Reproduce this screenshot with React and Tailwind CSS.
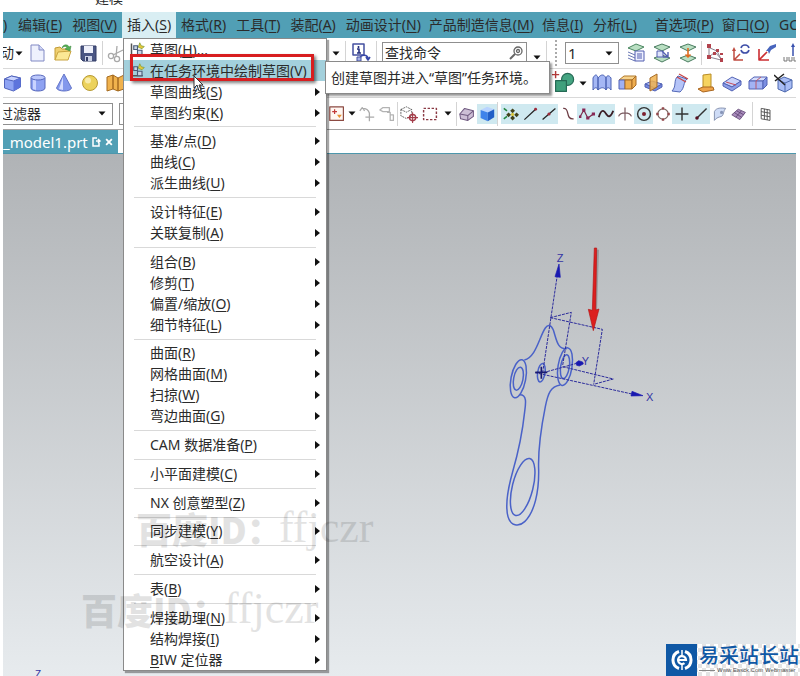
import React from "react";

const MENUS = [
  ["编辑", "E"],
  ["视图", "V"],
  ["插入", "S"],
  ["格式", "R"],
  ["工具", "T"],
  ["装配", "A"],
  ["动画设计", "N"],
  ["产品制造信息", "M"],
  ["信息", "I"],
  ["分析", "L"],
  ["首选项", "P"],
  ["窗口", "O"],
];

const INSERT_GROUPS = [
  [["草图", "H", "..."], ["在任务环境中绘制草图", "V"], ["草图曲线", "S"], ["草图约束", "K"]],
  [["基准/点", "D"], ["曲线", "C"], ["派生曲线", "U"]],
  [["设计特征", "E"], ["关联复制", "A"]],
  [["组合", "B"], ["修剪", "T"], ["偏置/缩放", "O"], ["细节特征", "L"]],
  [["曲面", "R"], ["网格曲面", "M"], ["扫掠", "W"], ["弯边曲面", "G"]],
  [["CAM 数据准备", "P"]],
  [["小平面建模", "C"]],
  [["NX 创意塑型", "Z"]],
  [["同步建模", "Y"]],
  [["航空设计", "A"]],
  [["表", "B"]],
  [["焊接助理", "N"], ["结构焊接", "I"], ["BIW 定位器", ""]],
];

function Label({ text, letter, tail = "" }) {
  if (!letter) {
    return (
      <span>
        <u className="underline-offset-2">{text[0]}</u>
        {text.slice(1)}
      </span>
    );
  }
  return (
    <span>
      {text}(<u className="underline-offset-2">{letter}</u>){tail}
    </span>
  );
}

function Svg({ children, size = 20 }) {
  return (
    <svg width={size} height={size} viewBox="0 0 20 20" fill="none" strokeLinejoin="round" aria-hidden="true">
      {children}
    </svg>
  );
}

const Caret = () => (
  <svg width="8" height="5" viewBox="0 0 8 5" aria-hidden="true" className="shrink-0">
    <path d="M0.5 0.5h7L4 4.5z" fill="#111" />
  </svg>
);

const Sep = () => <span className="h-6 w-px shrink-0 bg-[#d4d4d4]" />;

const ICONS = {
  newFile: (
    <Svg>
      <path d="M4 2h8l5 5v11H4z" fill="#eef1fd" stroke="#8189c4" />
      <path d="M12 2v5h5" fill="#cfd5f5" stroke="#8189c4" />
    </Svg>
  ),
  open: (
    <Svg>
      <path d="M2 17V5l5-1 2 2h7v4" fill="#f0d070" stroke="#c29b35" />
      <path d="M2 17l3-8 13-1-3 9z" fill="#fbe894" stroke="#c9a440" />
      <path d="M9 5c1-4 6-4 7-1l2-1-1 5-5-2 2-1c-1-2-3-2-5 0z" fill="#56b054" stroke="#338038" strokeWidth=".5" />
    </Svg>
  ),
  save: (
    <Svg>
      <path d="M2 3h15v15H4l-2-2z" fill="#4a5684" stroke="#333d66" />
      <path d="M5 3h9v7H5z" fill="#eef0fa" />
      <path d="M6 13h7v5H6z" fill="#ccd2e6" />
      <path d="M7 14h2v4H7z" fill="#333d66" />
    </Svg>
  ),
  cut: (
    <Svg>
      <g stroke="#a9a9a9" strokeWidth="1.3">
        <circle cx="5" cy="13" r="2.6" />
        <circle cx="11" cy="16" r="2.6" />
        <path d="M7 12l10-5M10 14l1-11" />
      </g>
    </Svg>
  ),
  block: (
    <Svg>
      <path d="M1.500 6l7-3 9 2v9l-7 4-9-3z" fill="#8fa4f3" stroke="#5365bd" />
      <path d="M1.500 6l7-3 9 2-7 3z" fill="#c8d3ff" stroke="#5365bd" />
      <path d="M10.500 8l7-3v9l-7 4z" fill="#5d74dc" />
    </Svg>
  ),
  cylinder: (
    <Svg>
      <path d="M3 5v10c0 4 14 4 14 0V5" fill="#8ea2f2" stroke="#5768bd" />
      <path d="M5 6h3v11l-3-1z" fill="#c9d3ff" />
      <ellipse cx="10" cy="4.500" rx="7" ry="2.500" fill="#bcc8fb" stroke="#5768bd" />
    </Svg>
  ),
  cone: (
    <Svg>
      <path d="M10 1L2.500 15c1 4 14 4 15 0z" fill="#8398ec" stroke="#6475c8" />
      <path d="M9 4L5 16l4 1z" fill="#d3dbff" />
    </Svg>
  ),
  sphere: (
    <Svg>
      <circle cx="10" cy="10" r="7.500" fill="#ecd25c" stroke="#b79a34" />
      <circle cx="8" cy="7.500" r="3" fill="#f8ebaa" />
    </Svg>
  ),
  goldFold: (
    <Svg>
      <path d="M1 4l6-2v14l-6 2zM7 2l5 3v13l-5-2zM12 5l6-3v14l-6 2z" fill="#f0b24d" stroke="#a56b20" />
    </Svg>
  ),
  info: (
    <Svg>
      <path d="M2 1h11v11H2z" fill="#fff" stroke="#4450a0" strokeWidth="1.500" />
      <path d="M7.500 3v2M6 6h2v4M6 10h4" stroke="#26307e" strokeWidth="1.600" />
      <path d="M9 16c0-5 8-5 8 0M15 14l2 3 2-3" stroke="#3848a8" strokeWidth="1.600" />
      <path d="M6 14h4v4H6z" fill="#a9b3e6" stroke="#4450a0" />
    </Svg>
  ),
  layerList: (
    <Svg>
      <path d="M2 5l8-4 8 3-8 4z" fill="#b9dfc2" stroke="#4a8660" />
      <path d="M2 9l7 3M2 12l7 3M2 15l7 3" stroke="#6a78b5" />
      <path d="M9 8h9v10H9z" fill="#eef0ff" stroke="#525fb0" />
      <path d="M11 11h5M11 13h5M11 15h5" stroke="#525fb0" />
    </Svg>
  ),
  layerView: (
    <Svg>
      <path d="M2 4l8-3 8 3-8 4zM2 15l8-3 8 3-8 4z" fill="#b9dfc2" stroke="#4a7c60" />
      <path d="M5 8h6v6H5z" fill="#dfe4fc" stroke="#525fb0" />
      <path d="M10 8l6 6M16 9v5h-5" stroke="#525fb0" strokeWidth="1.400" />
    </Svg>
  ),
  layerMove: (
    <Svg>
      <path d="M2 4l8-3 8 3-8 4zM2 15l8-3 8 3-8 4z" fill="#b9dfc2" stroke="#4a7c60" />
      <path d="M10 5v9M7.500 11.500L10 14l2.500-2.500" stroke="#e06b1e" strokeWidth="1.600" />
    </Svg>
  ),
  wcs: (
    <Svg>
      <path d="M4 3v11l6-5 7 8M4 14l12 3M5 5l7 3 4 8" stroke="#8a8090" />
      <path d="M2 1h4v4H2zM11 6h3v3h-3zM2 12h4v4H2zM15 15h3v4h-3zM8 9h3v3H8zM15 10h3v2h-3z" fill="#b2434d" />
    </Svg>
  ),
  csysRotate: (
    <Svg>
      <path d="M3 7v10l9 0M3 17l6-6" stroke="#c04b40" strokeWidth="1.500" />
      <path d="M1 8l2-4 2 4z" fill="#c04b40" />
      <path d="M10 5c1-4 7-4 8 0M18 7c-1 4-7 4-8 0" stroke="#3f4fa8" strokeWidth="1.600" />
    </Svg>
  ),
  csysMove: (
    <Svg>
      <path d="M2 6v11h10M2 17l8-8" stroke="#cb2e32" strokeWidth="1.600" />
      <path d="M9 8l4-5 6-2 0 3-5 3-2 4-1-3z" fill="#4865bd" />
    </Svg>
  ),
  csysSave: (
    <Svg>
      <path d="M10 2v11" stroke="#3951ae" strokeWidth="1.500" />
      <path d="M8 4l2-4 2 4z" fill="#3951ae" />
      <path d="M1 14v4h3v-4M6 14v4h3v-4M11 14v4h3v-4" stroke="#777" />
    </Svg>
  ),
  unite: (
    <Svg size={24}>
      <path d="M3 0v6M0 3h6" stroke="#b23838" strokeWidth="1.200" />
      <circle cx="13" cy="7" r="5" fill="#45a582" stroke="#256a55" />
      <path d="M3 8h9v9H3z" fill="#3fa07c" stroke="#256a55" />
    </Svg>
  ),
  through: (
    <Svg>
      <path d="M1 5c2-4 4-4 5 0v12c-1-3-3-3-5 0zM6 5c3-4 6-4 8 0v12c-2-3-5-3-8 0zM14 5c1-3 3-3 5 0v12c-2-3-4-3-5 0z" fill="#a5b7f4" stroke="#4c62b4" />
    </Svg>
  ),
  shell: (
    <Svg>
      <path d="M1 7l5-4h12l-4 4z" fill="#f7d38c" stroke="#b37a2a" />
      <path d="M1 7h6v9H1z" fill="#9fb0f3" stroke="#5263b5" />
      <path d="M7 7h7v9H7z" fill="#efae50" stroke="#a76b25" />
      <path d="M14 7l4-4v9l-4 4z" fill="#efae50" stroke="#a76b25" />
    </Svg>
  ),
  trimBody: (
    <Svg>
      <path d="M1 11l7-3 10 3-7 4z" fill="#aebcf7" stroke="#5263b5" />
      <path d="M1 11v3l10 4 7-4v-3l-7 4z" fill="#7488df" stroke="#5263b5" />
      <path d="M6 5l7-4v13l-7 4z" fill="#f0b24d" stroke="#a76b25" fillOpacity=".85" />
    </Svg>
  ),
  sheet: (
    <Svg>
      <path d="M2 18C7 13 3 7 8 3l9 3c-4 3-2 9-7 13z" fill="#b5c4f8" stroke="#5368b8" />
      <path d="M9 1l9 5M7 4l9 5" stroke="#c94545" strokeWidth="1.300" />
    </Svg>
  ),
  flange: (
    <Svg>
      <path d="M7 2l8-1v13l-8 2z" fill="#f6d35f" stroke="#b98c25" />
      <path d="M2 16l5-2 10 0 1 3-11 2z" fill="#f0a54a" stroke="#a9661f" />
    </Svg>
  ),
  slab: (
    <Svg>
      <path d="M1 10l9-6 9 4-9 6z" fill="#c9d3fb" stroke="#5263b5" />
      <path d="M1 10v3l9 5 9-6V8l-9 6z" fill="#8d9fe9" stroke="#5263b5" />
      <path d="M4 9l10 3" stroke="#c54c5a" />
    </Svg>
  ),
  box: (
    <Svg>
      <path d="M1 8l5-4h13l-4 4z" fill="#d6defd" stroke="#5263b5" />
      <path d="M1 8h14v8H1z" fill="#a3b3f5" stroke="#5263b5" />
      <path d="M15 8l4-4v8l-4 4z" fill="#7c8fe2" stroke="#5263b5" />
      <path d="M8 16V8l5-4" stroke="#b9576a" />
    </Svg>
  ),
  deleteFace: (
    <Svg>
      <path d="M4 7l6-3 8 3v8l-7 4-7-3z" fill="#a9bdf5" stroke="#4d68ae" />
      <path d="M4 7l7 3 7-3M11 10v9" stroke="#4d68ae" />
      <path d="M0 2l11 10M10 1L1 8" stroke="#222" strokeWidth="1.500" />
    </Svg>
  ),
  pointBox: (
    <Svg size={16}>
      <path d="M1 1h17v17H1z" fill="#fff7f2" stroke="#8c4a42" strokeWidth="1.500" />
      <path d="M7 4v6M4 7h6" stroke="#c23a3a" strokeWidth="1.500" />
      <path d="M10 11h6l-3 4z" fill="#e69030" />
    </Svg>
  ),
  greyAxis: (
    <Svg size={16}>
      <path d="M1 6l3-4 3 4M4 3c5 0 8 2 9 6M13 8v11M8 14h11" stroke="#aaa" strokeWidth="1.600" />
    </Svg>
  ),
  greyStack: (
    <Svg size={16}>
      <path d="M1 5l4-3h8v5H5zM10 8h4v9M14 11h4v7h-4z" stroke="#b3b3b3" strokeWidth="1.600" />
    </Svg>
  ),
  cubeTarget: (
    <Svg size={18}>
      <path d="M1 5l6-3 6 3v7l-6 3-6-3zM1 5l6 3 6-3" stroke="#555" strokeDasharray="2 1" />
      <circle cx="14" cy="14" r="3.500" stroke="#a33c48" strokeWidth="1.500" />
      <path d="M14 8v12M8 14h12" stroke="#a33c48" strokeWidth="1.200" />
    </Svg>
  ),
  marquee: (
    <Svg size={16}>
      <path d="M2 3h16v14H2z" stroke="#8b3b45" strokeWidth="1.800" strokeDasharray="3 2" />
    </Svg>
  ),
  wireCube: (
    <Svg size={16}>
      <path d="M1 10l6-7 11 3v7l-7 5-9-2z" fill="#cdbfd6" stroke="#705a80" strokeWidth="1.300" />
      <path d="M1 10l10 2 7-6M11 12v6" stroke="#705a80" strokeWidth="1.300" />
    </Svg>
  ),
  solidCube: (
    <Svg size={16}>
      <path d="M2 5l8-4 9 3-8 4z" fill="#b9d4ff" />
      <path d="M2 5l9 3v11l-9-4z" fill="#3f83ea" />
      <path d="M11 8l8-4v10l-8 5z" fill="#225fc7" />
    </Svg>
  ),
  snap: (
    <Svg size={16}>
      <path d="M1 3l4 3M1 16l4-3" stroke="#23863f" strokeWidth="2" />
      <path d="M12 3l3 3-3 3-3-3zM7 8l3 3-3 3-3-3zM17 8l3 3-3 3-3-3zM12 12l3 3-3 3-3-3z" fill="#42431c" />
      <circle cx="12" cy="10.500" r="2" fill="#d8c63a" />
    </Svg>
  ),
  endLine: (
    <Svg size={16}>
      <path d="M3 17L17 4" stroke="#222" strokeWidth="1.600" />
      <circle cx="17" cy="4" r="1.800" fill="#9d2b3b" />
    </Svg>
  ),
  midLine: (
    <Svg size={16}>
      <path d="M2 17L18 3" stroke="#222" strokeWidth="1.600" />
      <circle cx="10" cy="10" r="2" fill="#9d2b3b" />
    </Svg>
  ),
  curveEnd: (
    <Svg size={16}>
      <path d="M4 3c9-1 2 14 13 13" stroke="#6b3a42" strokeWidth="1.600" />
    </Svg>
  ),
  spline: (
    <Svg size={16}>
      <path d="M1 14L6 5l5 10 7-5" stroke="#7b2a4c" strokeWidth="1.500" />
      <path d="M4 3h4v4H4zM9 13h4v4H9zM16 8h4v4h-4zM0 12h3v3H0z" fill="#872755" />
    </Svg>
  ),
  splineSolid: (
    <Svg size={16}>
      <path d="M1 14C5 0 9 8 11 11s5 3 8-5" stroke="#3a1d25" strokeWidth="2.200" />
    </Svg>
  ),
  intersect: (
    <Svg size={16}>
      <path d="M10 2v16M2 13c2-6 14-6 16 0" stroke="#7a5a60" strokeWidth="1.500" />
    </Svg>
  ),
  center: (
    <Svg size={16}>
      <circle cx="10" cy="10" r="8" stroke="#333" strokeWidth="1.800" />
      <circle cx="10" cy="10" r="2.500" fill="#7c2030" />
    </Svg>
  ),
  quadrant: (
    <Svg size={16}>
      <circle cx="10" cy="10" r="6.500" stroke="#7b6560" strokeWidth="1.500" />
      <path d="M8.500 1.500h3v3h-3zM8.500 15.500h3v3h-3zM1.500 8.500h3v3h-3zM15.500 8.500h3v3h-3z" fill="#93474b" />
    </Svg>
  ),
  plus: (
    <Svg size={16}>
      <path d="M10 2v16M2 10h16" stroke="#333" strokeWidth="1.800" />
    </Svg>
  ),
  onCurve: (
    <Svg size={16}>
      <path d="M4 16L17 3" stroke="#333" strokeWidth="1.800" />
      <circle cx="5" cy="15" r="2.200" fill="#512" />
    </Svg>
  ),
  onFace: (
    <Svg size={16}>
      <path d="M3 18V7c2-5 9-5 14-4-3 3-2 8-5 10-3 1-6 1-9 5z" fill="#cfdcf6" stroke="#727fa0" />
      <circle cx="12" cy="8" r="2" fill="#8795b8" />
    </Svg>
  ),
  facet: (
    <Svg size={16}>
      <path d="M1 11l8-7 9 4-7 9z" fill="#a88bbb" stroke="#5b4070" />
      <path d="M4 8l9 6M7 6l9 5M6 14l7-8" stroke="#5b4070" />
    </Svg>
  ),
  grid: (
    <Svg size={16}>
      <path d="M4 3l11 2v13L4 16zM8 3.500v13M11.500 4v13.500M4 7l11 2M4 11.500l11 2" stroke="#555" strokeWidth="1.200" />
    </Svg>
  ),
};

function Tool({ icon, width = "w-[26px]", on = false }) {
  return (
    <button
      type="button"
      aria-label={icon}
      className={`flex h-5 shrink-0 items-center justify-center ${width} ${on ? "bg-[#cfe9f0]" : ""}`}
    >
      {ICONS[icon]}
    </button>
  );
}

function MenuBar() {
  return (
    <nav className="flex h-[26px] shrink-0 items-center overflow-hidden bg-[#519fb5] whitespace-nowrap">
      <span className="w-[10px] shrink-0">)</span>
      {MENUS.map(([t, k]) => (
        <button
          key={t}
          type="button"
          className={`h-full shrink-0 pl-[5px] ${t.length > 2 ? "pr-[3px]" : "pr-[5px]"} ${
            k === "S" ? "bg-[#d9eef3]" : ""
          } ${t === "首选项" ? "ml-[8px]" : ""}`}
        >
          <Label text={t} letter={k} />
        </button>
      ))}
      <button type="button" className="h-full shrink-0 px-[5px]">GC</button>
    </nav>
  );
}

const PICKERS = [
  ["snap", true],
  ["endLine", true],
  ["midLine", true],
  ["curveEnd", false],
  ["spline", true],
  ["splineSolid", true],
  ["intersect", false],
  ["center", true],
  ["quadrant", false],
  ["plus", true],
  ["onCurve", true],
  ["onFace", false],
  ["facet", false],
];

function Toolbars() {
  return (
    <div className="shrink-0 overflow-hidden bg-white">
      <div className="flex h-[31px] items-center border-b border-[#d9d9d9]">
        <div className="flex w-[324px] shrink-0 items-center">
          <span className="flex w-[11px] shrink-0 justify-end overflow-hidden">动</span>
          <span className="flex w-[10px] justify-center"><Caret /></span>
          <Tool icon="newFile" />
          <Tool icon="open" />
          <Tool icon="save" />
          <Sep />
          <Tool icon="cut" />
        </div>
        <div className="flex items-center">
          <span className="flex w-[18px] justify-center"><Caret /></span>
          <Sep />
          <Tool icon="info" width="w-[30px]" />
          <Sep />
          <label className="ml-[5px] flex h-[22px] w-[145px] items-center border border-[#8f8f8f] px-[2px]">
            <input aria-label="查找命令" defaultValue="查找命令" className="w-[124px] bg-transparent outline-none" />
            <svg width="14" height="14" viewBox="0 0 14 14" fill="none" stroke="#666" strokeWidth="1.300" aria-hidden="true">
              <circle cx="9" cy="5" r="4" />
              <circle cx="9" cy="5" r="1.500" />
              <path d="M6 8l-5 5" strokeWidth="2" />
            </svg>
          </label>
          <span className="flex w-[19px] justify-center pt-2"><Caret /></span>
          <Sep />
          <span className="mx-[8px] h-[26px] border-l-2 border-dotted border-[#aaa]" />
          <span className="relative mr-1 flex items-center">
            <select aria-label="工作图层" className="h-[22px] w-[54px] appearance-none border border-[#8f8f8f] pl-[2px] text-[15px] leading-5">
              <option>1</option>
            </select>
            <span className="pointer-events-none absolute right-[6px]"><Caret /></span>
          </span>
          <Tool icon="layerList" />
          <Tool icon="layerView" />
          <Tool icon="layerMove" />
          <Sep />
          <Tool icon="wcs" />
          <Tool icon="csysRotate" />
          <Tool icon="csysMove" />
          <Tool icon="csysSave" />
        </div>
      </div>
      <div className="flex h-[29px] items-center border-b border-[#d9d9d9]">
        <div className="flex w-[548px] shrink-0 items-center gap-1">
          <Tool icon="block" width="w-[20px]" />
          <Tool icon="cylinder" width="w-[22px]" />
          <Tool icon="cone" width="w-[22px]" />
          <Tool icon="sphere" width="w-[22px]" />
          <Tool icon="goldFold" width="w-[22px]" />
        </div>
        <div className="flex items-center">
          <Tool icon="unite" />
          <span className="flex w-[12px] justify-center"><Caret /></span>
          <Tool icon="through" />
          <Tool icon="shell" />
          <Tool icon="trimBody" />
          <Tool icon="sheet" />
          <Tool icon="flange" />
          <Tool icon="slab" />
          <Tool icon="box" />
          <Tool icon="deleteFace" />
        </div>
      </div>
      <div className="flex h-[32px] items-center border-b border-[#a3a3a3]">
        <div className="flex w-[324px] shrink-0 items-center gap-[6px]">
          <button type="button" className="flex h-[22px] w-[110px] items-center justify-between border border-l-0 border-[#8f8f8f] pr-[6px]">
            <span className="flex w-[38px] justify-end overflow-hidden whitespace-nowrap">过滤器</span>
            <Caret />
          </button>
          <span className="h-[22px] w-[180px] border border-[#8f8f8f]" />
        </div>
        <div className="flex items-center">
          <Tool icon="pointBox" width="w-[20px]" />
          <span className="flex w-[10px] justify-center"><Caret /></span>
          <Tool icon="greyAxis" width="w-[20px]" />
          <Tool icon="greyStack" width="w-[20px]" />
          <Sep />
          <Tool icon="cubeTarget" width="w-[22px]" />
          <Tool icon="marquee" width="w-[20px]" />
          <span className="flex w-[16px] justify-center"><Caret /></span>
          <Sep />
          <Tool icon="wireCube" width="w-[20px]" />
          <Tool icon="solidCube" width="w-[20px]" on />
          <Sep />
          <span className="ml-[3px] flex">
            {PICKERS.map(([icon, on]) => (
              <Tool key={icon} icon={icon} on={on} width="w-[19px]" />
            ))}
          </span>
          <span className="w-[4px]" />
          <Sep />
          <Tool icon="grid" />
        </div>
      </div>
    </div>
  );
}

function Part() {
  return (
    <svg
      width="200"
      height="300"
      viewBox="0 0 600 900"
      fill="none"
      className="absolute top-[86px] left-[477px]"
      role="img"
      aria-label="连杆草图"
    >
      <g stroke="#4a62c8" strokeWidth="4.500">
        <path d="M133 360C168 352 178 290 196 264C204 252 213 254 220 270C230 300 232 328 260 326" />
        <ellipse cx="115" cy="416" rx="22" ry="58" transform="rotate(11 115 416)" />
        <ellipse cx="115" cy="416" rx="14" ry="35" transform="rotate(11 115 416)" />
        <ellipse cx="255" cy="380" rx="21" ry="57" transform="rotate(9 255 380)" />
        <ellipse cx="255" cy="380" rx="13" ry="36" transform="rotate(9 255 380)" />
        <path d="M120 464C142 464 137 492 134 515C126 590 114 640 98 695C84 745 76 800 84 830C92 858 116 862 134 845C164 816 177 755 176 690C174 640 184 560 196 500C204 460 212 440 240 435" />
        <ellipse cx="128" cy="741" rx="31" ry="88" transform="rotate(14 128 741)" />
        <ellipse cx="184" cy="398" rx="11" ry="28" transform="rotate(9 184 398)" />
      </g>
      <g stroke="#2c2c9c" strokeWidth="3" strokeDasharray="9 3">
        <path d="M188 398L232 105" />
        <path d="M165 398L456 462" />
        <path d="M211 233L367 268L341 433" />
        <path d="M211 233L274 217L248 376" />
        <path d="M190 398L290 370" />
        <path d="M248 380L400 417L341 433" />
      </g>
      <path d="M184 380v36M166 397h36" stroke="#1a1a70" strokeWidth="5" />
      <path d="M237 72L225 110L241 112z" fill="#1919b0" stroke="#1919b0" strokeWidth="2" />
      <path d="M489 467L456 454L453 468z" fill="#1919b0" stroke="#1919b0" strokeWidth="2" />
      <path d="M288 368l8-6 12 4 2 6-12 6-8-2z" fill="#1919b0" stroke="#1919b0" strokeWidth="2" />
      <g fill="#3434a4" fontFamily="Liberation Sans, sans-serif" fontSize="33">
        <text x="230" y="65">Z</text>
        <text x="305" y="374">Y</text>
        <text x="498" y="484">X</text>
      </g>
      <path d="M347 24L341 210" stroke="#666" strokeOpacity=".4" strokeWidth="10" transform="translate(5 5)" />
      <path d="M343 24h7L347 210L357 207L340 272L325 208L337 211z" fill="#dc1f1f" stroke="#b41515" strokeWidth="2" />
    </svg>
  );
}

function Watermark({ place }) {
  return (
    <div
      aria-hidden="true"
      className={`pointer-events-none absolute flex items-center whitespace-nowrap text-black opacity-[0.11] ${place}`}
    >
      <span className="w-[143px] font-['Noto_Sans_CJK_SC',sans-serif] text-[36px] leading-10 font-black">百度ID：</span>
      <span className="font-['Liberation_Serif',serif] text-[44px] leading-10">ffjczr</span>
    </div>
  );
}

function InsertMenu() {
  return (
    <div
      role="menu"
      className="absolute top-[38px] left-[123px] flex h-[633px] w-[204px] flex-col border border-[#8a8a8a] bg-white shadow-[2px_2px_1px_rgba(0,0,0,0.35)]"
    >
      {INSERT_GROUPS.map((group, g) => (
        <React.Fragment key={g}>
          {g > 0 && (
            <div className="flex flex-1 items-center px-[10px]">
              <span className="h-px w-full bg-[#d9d9d9]" />
            </div>
          )}
          {group.map(([text, letter, tail]) => {
            const hot = letter === "V";
            return (
              <button
                key={text}
                type="button"
                role="menuitem"
                className={`flex h-[21px] shrink-0 items-center justify-between pr-[6px] ${hot ? "bg-[#a3d0dc]" : ""}`}
              >
                <span className="flex items-center">
                  <span className="flex w-[26px] justify-center">
                    {(letter === "H" || hot) && (
                      <svg width="15" height="15" viewBox="0 0 20 20" fill="none" aria-hidden="true">
                        <path d="M2 2v15h15" stroke="#555" strokeWidth="2" />
                        <path d="M5 5h5v5H5zM10 11h6v6h-6z" fill="#c9d6e6" stroke="#4b5b78" strokeWidth="1.500" />
                        <path d="M13 1l2 4 4 1-3 3-5-2z" fill="#e9c83a" stroke="#7d9b36" />
                      </svg>
                    )}
                  </span>
                  <Label text={text} letter={letter} tail={tail} />
                </span>
                {letter !== "H" && !hot && (
                  <svg width="5" height="8" viewBox="0 0 5 8" aria-hidden="true">
                    <path d="M0 0v8L5 4z" fill="#111" />
                  </svg>
                )}
              </button>
            );
          })}
        </React.Fragment>
      ))}
    </div>
  );
}

function SiteBadge() {
  return (
    <div className="absolute right-0 bottom-0 flex h-8 w-[134px] overflow-hidden bg-[conic-gradient(#e4e4e4_25%,#fff_0_50%,#e4e4e4_0_75%,#fff_0)] bg-[size:8px_8px] whitespace-nowrap">
      <span className="flex w-[31px] shrink-0 items-center justify-center bg-[#0f58a5]">
        <svg width="22" height="22" viewBox="0 0 22 22" fill="none" stroke="#fff" aria-hidden="true">
          <path d="M8 2.500a9 9 0 0 0 0 17M14 2.500a9 9 0 0 1 0 17" strokeWidth="3" />
          <path d="M7 11h8a4 4 0 1 0-1.500 3.200" strokeWidth="2.200" />
          <path d="M11 1v5M11 16v5" strokeWidth="1.500" />
        </svg>
      </span>
      <span className="flex flex-col pl-[2px] text-[#0f58a5]">
        <span className="text-[20px] leading-[23px] font-medium">易采站长站</span>
        <span className="flex items-center gap-[2px] font-['Liberation_Sans',sans-serif] text-[6px] leading-[7px] text-[#555]">
          <span className="h-px w-[16px] shrink-0 bg-[#888]" />
          Www.Easck.Com Webmaster
        </span>
      </span>
    </div>
  );
}

export default function App() {
  return (
    <div className="relative flex h-screen flex-col overflow-hidden bg-white pr-1 pl-[3px] font-['Noto_Sans','Noto_Sans_CJK_SC',sans-serif] text-[14px] leading-5 text-[#2b2b2b]">
      <header className="h-3 shrink-0">
        <div className="flex h-[5px] items-end overflow-hidden pl-[92px]">
          <span className="leading-[14px]">建模</span>
        </div>
      </header>
      <MenuBar />
      <Toolbars />
      <div className="flex h-[23px] shrink-0">
        <div className="flex w-[115px] items-center gap-[4px] bg-[#519fb5] text-[15px] whitespace-nowrap text-white">
          _model1.prt
          <svg width="9" height="10" viewBox="0 0 9 10" fill="none" stroke="#fff" strokeWidth="1.500" aria-hidden="true">
            <path d="M5 1H1v8h6V6M4 4h4M6 2l2 2-2 2" />
          </svg>
          <button type="button" aria-label="关闭">
            <svg width="8" height="8" viewBox="0 0 7 7" stroke="#fff" strokeWidth="1.600" aria-hidden="true">
              <path d="M1 1l5 5M6 1L1 6" />
            </svg>
          </button>
        </div>
      </div>
      <main className="relative flex-1 overflow-hidden border-t border-[#4d97ac] bg-linear-to-b from-[#b0b3b6] to-[#e7ebee]">
        <Part />
        <span className="absolute -bottom-[9px] left-[32px] font-['Liberation_Sans',sans-serif] text-[10px] text-[#3434a4]">Z</span>
      </main>
      <InsertMenu />
      <Watermark place="top-[508px] left-[136px]" />
      <Watermark place="top-[589px] left-[81px]" />
      <div className="pointer-events-none absolute top-[54px] left-[130px] h-[27px] w-[184px] border-[3px] border-[#d81e20] shadow-[2px_2px_3px_rgba(0,0,0,0.5)]" />
      <svg width="12" height="17" viewBox="0 0 12 17" aria-hidden="true" className="absolute top-[75px] left-[193px]">
        <path d="M1 1v12l3-3 2 6 2-1-2-5h4z" fill="#fff" stroke="#333" />
      </svg>
      <div
        role="tooltip"
        className="absolute top-[61px] left-[325px] flex h-[33px] w-[225px] items-center border border-[#8a8a8a] bg-white pl-[5px] whitespace-nowrap shadow-[2px_2px_2px_rgba(0,0,0,0.4)]"
      >
        创建草图并进入“草图”任务环境。
      </div>
      <SiteBadge />
    </div>
  );
}
